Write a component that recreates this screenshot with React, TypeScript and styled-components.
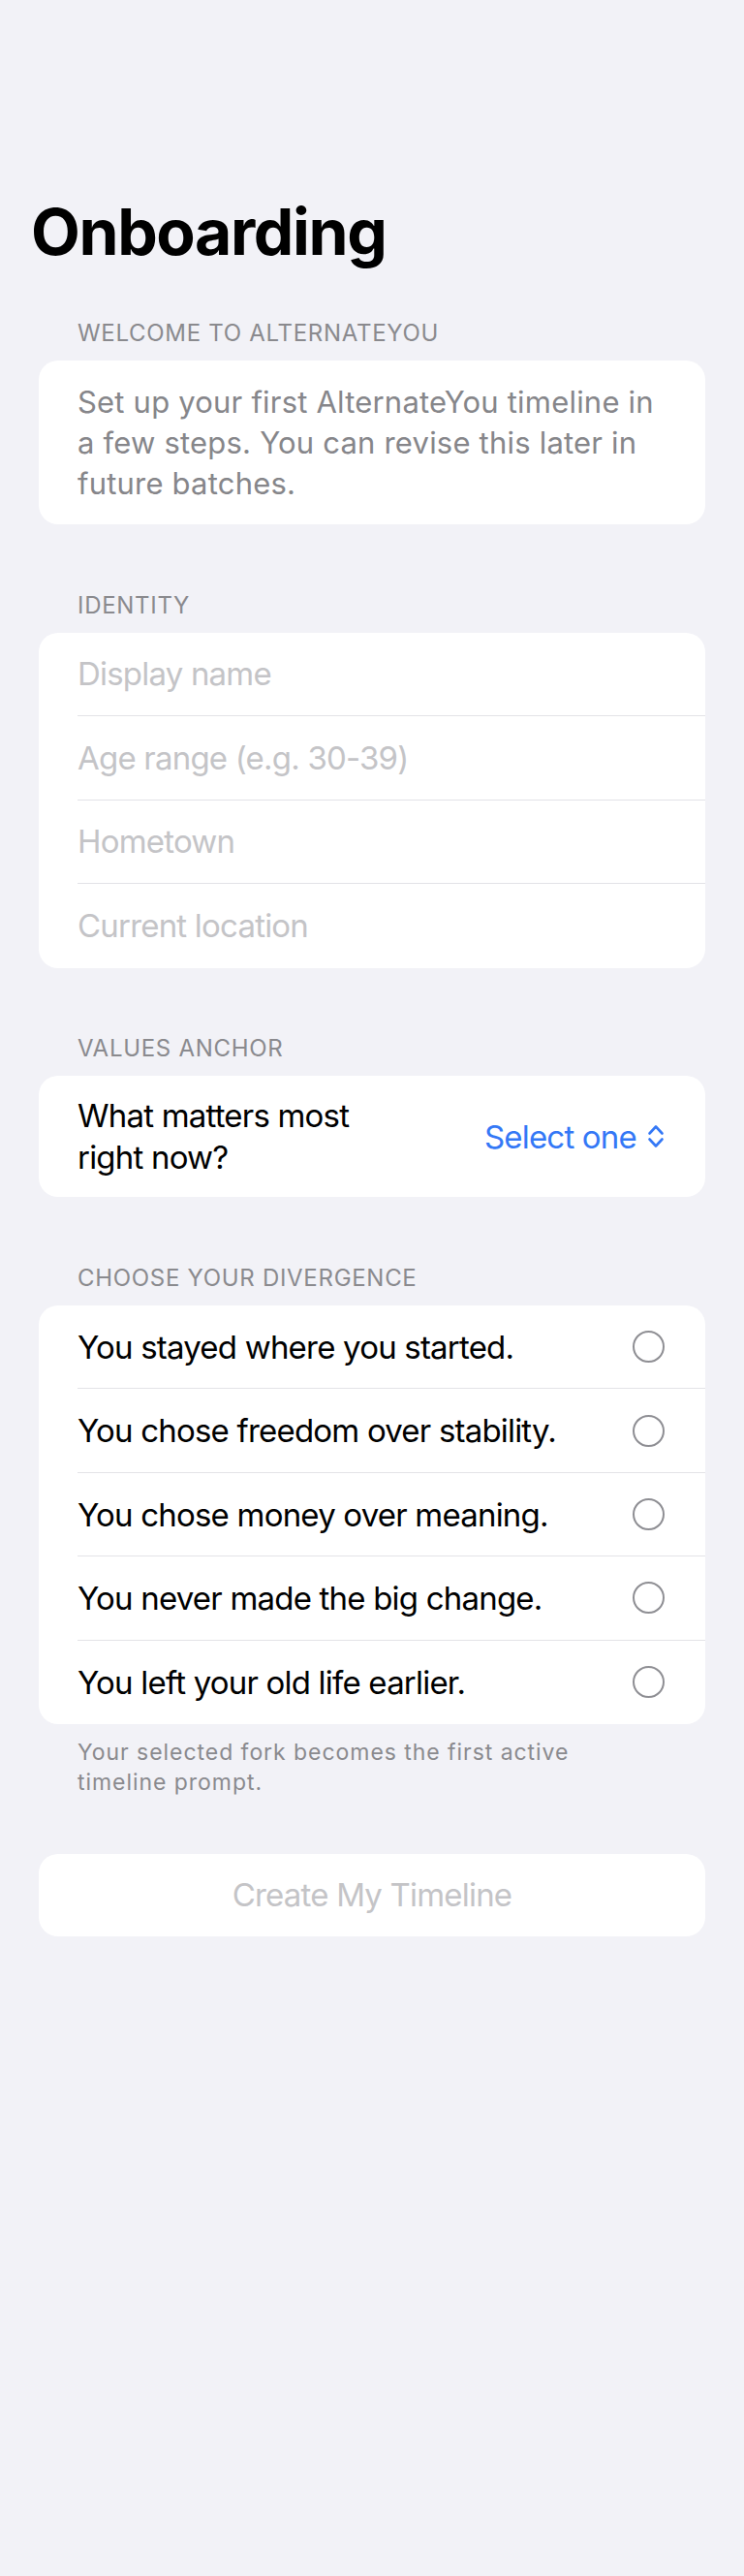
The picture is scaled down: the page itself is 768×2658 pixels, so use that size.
import React from 'react'
import styled, { createGlobalStyle } from 'styled-components'

const GlobalStyle = createGlobalStyle`
  html, body {
    margin: 0;
    padding: 0;
    background: #f2f2f7;
  }
  body {
    font-family: Inter, "Noto Sans", "Liberation Sans", sans-serif;
    -webkit-font-smoothing: antialiased;
  }
`

const Screen = styled.main`
  box-sizing: border-box;
  min-height: 2658px;
  padding: 199px 40px 0;
  background: #f2f2f7;
  display: flex;
  flex-direction: column;
`

const LargeTitle = styled.h1`
  margin: 0 0 50px -8px;
  font-size: 66px;
  line-height: 80px;
  font-weight: 700;
  letter-spacing: -1.4px;
  color: #000;
`

const Section = styled.section`
  display: flex;
  flex-direction: column;

  & + & {
    margin-top: 68.7px;
  }
`

const SectionHeader = styled.h2`
  margin: 0 0 13px;
  padding-left: 40px;
  font-size: 24px;
  line-height: 30px;
  font-weight: 400;
  letter-spacing: 0.7px;
  text-transform: uppercase;
  color: #8a8a8e;
`

const Card = styled.div`
  background: #fff;
  border-radius: 20px;
  overflow: hidden;
`

const Intro = styled.p`
  margin: 0;
  padding: 21.5px 40px;
  font-size: 31px;
  line-height: 42px;
  letter-spacing: 0.2px;
  color: #86868a;
`

const Row = styled.div<{ height?: string }>`
  display: flex;
  height: ${props => props.height || '86.5px'};
  padding-left: 40px;
`

const RowBody = styled.div<{ padright?: string }>`
  box-sizing: border-box;
  flex: 1;
  display: flex;
  align-items: center;
  justify-content: space-between;
  padding-right: ${props => props.padright || '40px'};
  border-bottom: 1px solid #e3e3e7;

  ${Row}:last-child & {
    border-bottom: none;
  }
`

const Field = styled.input`
  width: 100%;
  padding: 0;
  border: none;
  outline: none;
  background: transparent;
  font-family: inherit;
  font-size: 33px;
  letter-spacing: -0.8px;
  color: #000;

  &::placeholder {
    color: #c4c4c7;
  }
`

const RowText = styled.span`
  font-size: 33px;
  letter-spacing: -0.8px;
  color: #000;
`

const PickerRow = styled.div`
  display: flex;
  align-items: center;
  justify-content: space-between;
  padding: 19.5px 42px 19.5px 40px;
`

const PickerLabel = styled.span`
  max-width: 330px;
  font-size: 33px;
  line-height: 43px;
  letter-spacing: -0.8px;
  color: #000;
`

const PickerValue = styled.button`
  display: flex;
  align-items: center;
  gap: 11px;
  padding: 0;
  border: none;
  background: none;
  font-family: inherit;
  font-size: 33px;
  letter-spacing: -0.8px;
  color: #3478f6;
`

const Radio = styled.span`
  box-sizing: border-box;
  width: 33px;
  height: 33px;
  border-radius: 50%;
  border: 2.5px solid #8e8e93;
`

const Footnote = styled.p`
  margin: 13.5px 0 0;
  padding-left: 40px;
  max-width: 545px;
  font-size: 23px;
  line-height: 31px;
  letter-spacing: 0.95px;
  color: #8a8a8e;
`

const PrimaryButton = styled.button`
  margin-top: 58px;
  height: 85px;
  border: none;
  border-radius: 20px;
  background: #fff;
  font-family: inherit;
  font-size: 33px;
  letter-spacing: -0.8px;
  color: #c4c4c7;
`

const UpDownChevron = () => (
  <svg width="18" height="25" viewBox="0 0 18 25" fill="none">
    <path
      d="M2.5 9.5L9 2.5L15.5 9.5M2.5 15.5L9 22.5L15.5 15.5"
      stroke="#3478f6"
      strokeWidth="2.6"
      strokeLinecap="round"
      strokeLinejoin="round"
    />
  </svg>
)

const identityFields = ['Display name', 'Age range (e.g. 30-39)', 'Hometown', 'Current location']

const divergences = [
  'You stayed where you started.',
  'You chose freedom over stability.',
  'You chose money over meaning.',
  'You never made the big change.',
  'You left your old life earlier.',
]

export default function App() {
  return (
    <>
      <GlobalStyle />
      <Screen>
        <LargeTitle>Onboarding</LargeTitle>

        <Section>
          <SectionHeader>Welcome to AlternateYou</SectionHeader>
          <Card>
            <Intro>
              Set up your first AlternateYou timeline in a few steps. You can revise this later in
              future batches.
            </Intro>
          </Card>
        </Section>

        <Section>
          <SectionHeader>Identity</SectionHeader>
          <Card>
            {identityFields.map(label => (
              <Row key={label}>
                <RowBody>
                  <Field placeholder={label} />
                </RowBody>
              </Row>
            ))}
          </Card>
        </Section>

        <Section>
          <SectionHeader>Values anchor</SectionHeader>
          <Card>
            <PickerRow>
              <PickerLabel>What matters most right now?</PickerLabel>
              <PickerValue>
                Select one
                <UpDownChevron />
              </PickerValue>
            </PickerRow>
          </Card>
        </Section>

        <Section>
          <SectionHeader>Choose your divergence</SectionHeader>
          <Card>
            {divergences.map(text => (
              <Row key={text} height="86.4px">
                <RowBody padright="42px">
                  <RowText>{text}</RowText>
                  <Radio />
                </RowBody>
              </Row>
            ))}
          </Card>
          <Footnote>Your selected fork becomes the first active timeline prompt.</Footnote>
          <PrimaryButton disabled>Create My Timeline</PrimaryButton>
        </Section>
      </Screen>
    </>
  )
}
